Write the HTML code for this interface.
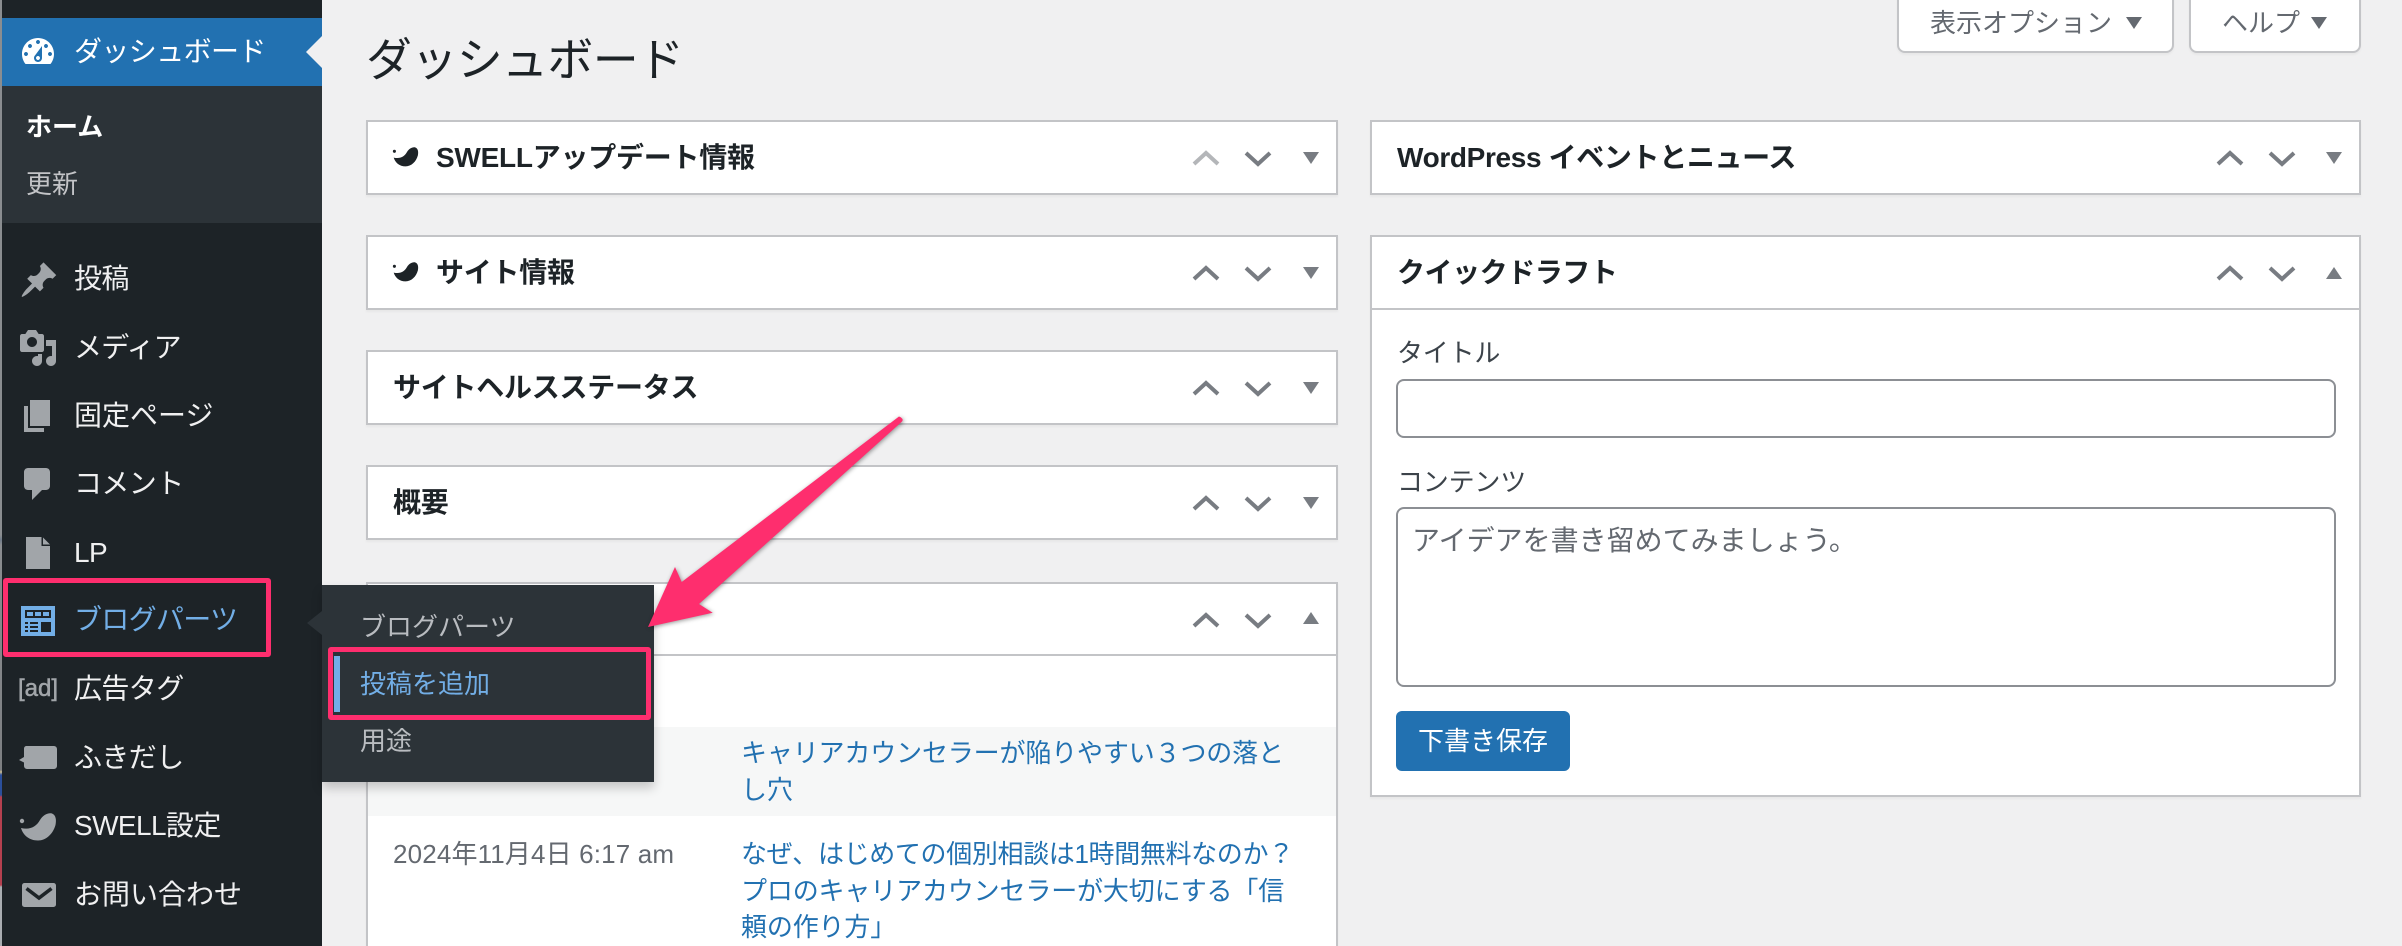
<!DOCTYPE html>
<html lang="ja"><head><meta charset="utf-8"><title>ダッシュボード</title>
<style>
*{box-sizing:border-box}
html,body{margin:0;padding:0;width:2402px;height:946px;overflow:hidden;background:#f0f0f1}
body{position:relative;font-family:"Liberation Sans","Noto Sans CJK JP",sans-serif;font-size:26px;color:#3c434a}
.t{position:absolute;white-space:nowrap;height:40px;line-height:40px}
.a{position:absolute}
.m{font-size:28px;color:#f0f0f1;left:74px;letter-spacing:-.6px}
.box{position:absolute;background:#fff;border:2px solid #c3c4c7;box-shadow:0 2px 2px rgba(0,0,0,.04)}
.h{font-size:28px;font-weight:700;color:#1d2327;letter-spacing:-.25px}
.f{font-size:26px;color:#b9bcc0;left:360px}
.l{color:#2271b1;left:741px;letter-spacing:-.15px}
svg{position:absolute;overflow:visible}
</style></head><body>

<!-- left stripe -->
<div class="a" style="left:0;top:0;width:2px;height:946px;background:linear-gradient(#8a8d90 0,#8a8d90 535px,#6f7a88 540px,#8a8d90 545px,#7d7f82 770px,#c9b98f 772px,#c9b98f 770px,#2b4f9b 775px,#2b4f9b 795px,#b5404f 797px,#b5404f 885px,#a9adb1 887px,#a9adb1 946px)"></div>

<!-- sidebar -->
<div class="a" style="left:2px;top:0;width:320px;height:946px;background:#1d2327"></div>
<div class="a" style="left:2px;top:18px;width:320px;height:68px;background:#2271b1"></div>
<div class="a" style="left:2px;top:86px;width:320px;height:137px;background:#2c3338"></div>
<svg style="left:0;top:0" width="330" height="80"><path d="M322 36L306 52L322 68Z" fill="#f0f0f1"/></svg>

<svg style="left:18px;top:32px" width="40" height="40" viewBox="0 0 20 20" fill="#fff"><path d="M3.76 16h12.48c1.1-1.37 1.76-3.11 1.76-5 0-4.42-3.58-8-8-8s-8 3.58-8 8c0 1.89.66 3.63 1.76 5zM10 4c.55 0 1 .45 1 1s-.45 1-1 1-1-.45-1-1 .45-1 1-1zM6 6c.55 0 1 .45 1 1s-.45 1-1 1-1-.45-1-1 .45-1 1-1zm8 0c.55 0 1 .45 1 1s-.45 1-1 1-1-.45-1-1 .45-1 1-1zm-5.37 5.55L12 7v6c0 1.1-.9 2-2 2s-2-.9-2-2c0-.57.24-1.08.63-1.45zM4 10c.55 0 1 .45 1 1s-.45 1-1 1-1-.45-1-1 .45-1 1-1zm12 0c.55 0 1 .45 1 1s-.45 1-1 1-1-.45-1-1 .45-1 1-1zm-5 3c0-.55-.45-1-1-1s-1 .45-1 1 .45 1 1 1 1-.45 1-1z"/></svg>
<svg style="left:19px;top:260px" width="40" height="40" viewBox="0 0 20 20" fill="#a1a5a9"><path d="M10.44 3.02l1.82-1.82 6.36 6.35-1.83 1.82c-1.05-.68-2.48-.57-3.41.36l-.75.75c-.92.93-1.04 2.35-.35 3.41l-1.83 1.82-2.41-2.41-2.8 2.79c-.42.42-3.38 2.71-3.8 2.29s1.86-3.39 2.28-3.81l2.79-2.79L4.1 9.36l1.83-1.82c1.05.69 2.48.57 3.4-.36l.75-.75c.93-.92 1.05-2.35.36-3.41z"/></svg>
<svg style="left:18px;top:328px" width="40" height="40" viewBox="0 0 20 20" fill="#a1a5a9"><path d="M13 11V4c0-.55-.45-1-1-1h-1.67L9 1H5L3.67 3H2c-.55 0-1 .45-1 1v7c0 .55.45 1 1 1h10c.55 0 1-.45 1-1zM7 4.5c1.38 0 2.5 1.12 2.5 2.5S8.38 9.5 7 9.5 4.5 8.38 4.5 7 5.62 4.5 7 4.5zM14 6h5v10.5c0 1.38-1.12 2.5-2.5 2.5S14 17.88 14 16.5s1.12-2.5 2.5-2.5c.17 0 .34.02.5.05V9h-3V6zm-4 8.05V13h2v3.5c0 1.38-1.12 2.5-2.5 2.5S7 17.88 7 16.5 8.12 14 9.5 14c.17 0 .34.02.5.05z"/></svg>
<svg style="left:18px;top:396px" width="40" height="40" viewBox="0 0 20 20" fill="#a1a5a9"><path d="M6 15V2h10v13H6zm-1 1h8v2H3V5h2v11z"/></svg>
<svg style="left:18px;top:464px" width="40" height="40" viewBox="0 0 20 20" fill="#a1a5a9"><path d="M5 2h9c1.1 0 2 .9 2 2v7c0 1.1-.9 2-2 2h-2l-5 5v-5H5c-1.1 0-2-.9-2-2V4c0-1.1.9-2 2-2z"/></svg>
<svg style="left:0;top:0" width="70" height="946" fill="#a1a5a9">
  <path d="M26 537H41.5V546H50V569H26Z"/><path d="M43 537.5L50 544.5H43Z"/>
  <rect x="21" y="606" width="34" height="30" fill="#72aee6"/>
  <rect x="25" y="610" width="26" height="8" fill="#1d2327"/>
  <rect x="27" y="612" width="6" height="4" fill="#72aee6"/><rect x="35" y="612" width="6" height="4" fill="#72aee6"/><rect x="43" y="612" width="6" height="4" fill="#72aee6"/>
  <rect x="41" y="622" width="10" height="10" fill="#1d2327"/>
  <g fill="#1d2327"><rect x="25" y="622" width="3" height="2"/><rect x="30" y="622" width="8" height="2"/><rect x="25" y="626" width="3" height="2"/><rect x="30" y="626" width="8" height="2"/><rect x="25" y="630" width="3" height="2"/><rect x="30" y="630" width="8" height="2"/></g>
  <path d="M26 746H54a3 3 0 0 1 3 3V766a3 3 0 0 1-3 3H27a3 3 0 0 1-3-3V762.500L19 760L24 757V749A3 3 0 0 1 26 746Z"/>
  <circle cx="22" cy="821" r="2.200"/>
  <path d="M21 828C30 830 36 827 40 820C43 815 48 812.500 52 813.500C56 815 56.500 820 55.500 825C53 834 46 840.500 38 840.500C29 840.500 23 835 21 828Z"/>
  <rect x="22" y="883" width="34" height="24" rx="2.500"/>
  <path d="M26.500 888.500L39 898L51.500 888.500" fill="none" stroke="#1d2327" stroke-width="3.600"/>
</svg>

<div class="t m" style="top:32px;color:#fff">ダッシュボード</div>
<div class="t" style="left:26px;top:107px;color:#fff;font-weight:700">ホーム</div>
<div class="t" style="left:26px;top:164px;color:#c3c4c7">更新</div>
<div class="t m" style="top:259px">投稿</div>
<div class="t m" style="top:328px;letter-spacing:-.8px">メディア</div>
<div class="t m" style="top:396px;letter-spacing:0">固定ページ</div>
<div class="t m" style="top:464px">コメント</div>
<div class="t m" style="top:533px">LP</div>
<div class="t m" style="top:600px;color:#72aee6;letter-spacing:-.7px">ブログパーツ</div>
<div class="t" style="left:18px;top:669px;font-size:24px;color:#a1a5a9;-webkit-text-stroke:.5px #a1a5a9">[ad]</div>
<div class="t m" style="top:669px">広告タグ</div>
<div class="t m" style="top:738px">ふきだし</div>
<div class="t m" style="top:806px">SWELL設定</div>
<div class="t m" style="top:875px;letter-spacing:0">お問い合わせ</div>

<!-- screen tabs -->
<div class="a" style="left:1897px;top:-12px;width:277px;height:65px;background:#fff;border:2px solid #c3c4c7;border-radius:8px;box-shadow:0 2px 2px rgba(0,0,0,.04)"></div>
<div class="a" style="left:2189px;top:-12px;width:172px;height:65px;background:#fff;border:2px solid #c3c4c7;border-radius:8px;box-shadow:0 2px 2px rgba(0,0,0,.04)"></div>
<div class="t" style="left:1930px;top:3px;color:#646970">表示オプション</div>
<div class="t" style="left:2222px;top:3px;color:#646970">ヘルプ</div>
<svg style="left:0;top:0" width="2402" height="40" fill="#646970"><path d="M2126 17H2142L2134 29Z"/><path d="M2311 17H2327L2319 29Z"/></svg>

<!-- title -->
<div class="t" style="left:366px;top:30px;height:60px;line-height:60px;font-size:46px;color:#1d2327;letter-spacing:-.65px">ダッシュボード</div>

<!-- left col boxes -->
<div class="box" style="left:366px;top:120px;width:972px;height:75px"></div>
<div class="box" style="left:366px;top:235px;width:972px;height:75px"></div>
<div class="box" style="left:366px;top:350px;width:972px;height:75px"></div>
<div class="box" style="left:366px;top:465px;width:972px;height:75px"></div>
<div class="box" style="left:366px;top:582px;width:972px;height:400px"></div>
<div class="a" style="left:368px;top:654px;width:968px;height:2px;background:#c3c4c7"></div>
<div class="a" style="left:368px;top:727px;width:968px;height:89px;background:#f6f7f7"></div>

<!-- swell icons in titles -->
<svg style="left:0;top:0" width="500" height="300" fill="#1d2327">
  <g transform="translate(379,-422) scale(.7)"><circle cx="22" cy="821" r="2.200" transform="translate(0,-2)"/><path d="M21 828C30 830 36 827 40 820C43 815 48 812.500 52 813.500C56 815 56.500 820 55.500 825C53 834 46 840.500 38 840.500C29 840.500 23 835 21 828Z"/></g>
  <g transform="translate(379,-307) scale(.7)"><circle cx="22" cy="821" r="2.200" transform="translate(0,-2)"/><path d="M21 828C30 830 36 827 40 820C43 815 48 812.500 52 813.500C56 815 56.500 820 55.500 825C53 834 46 840.500 38 840.500C29 840.500 23 835 21 828Z"/></g>
</svg>

<div class="t h" style="left:436px;top:138px">SWELLアップデート情報</div>
<div class="t h" style="left:436px;top:253px">サイト情報</div>
<div class="t h" style="left:393px;top:368px">サイトヘルスステータス</div>
<div class="t h" style="left:393px;top:483px">概要</div>

<!-- news rows -->
<div class="t l" style="top:733px">キャリアカウンセラーが陥りやすい３つの落と</div>
<div class="t l" style="top:770px">し穴</div>
<div class="t" style="left:393px;top:834px;color:#646970;letter-spacing:.15px">2024年11月4日 6:17 am</div>
<div class="t l" style="top:834px;letter-spacing:-.35px">なぜ、はじめての個別相談は1時間無料なのか？</div>
<div class="t l" style="top:871px">プロのキャリアカウンセラーが大切にする「信</div>
<div class="t l" style="top:907px">頼の作り方」</div>

<!-- right col -->
<div class="box" style="left:1370px;top:120px;width:991px;height:75px"></div>
<div class="box" style="left:1370px;top:235px;width:991px;height:562px"></div>
<div class="a" style="left:1372px;top:308px;width:987px;height:2px;background:#c3c4c7"></div>
<div class="t h" style="left:1397px;top:138px;letter-spacing:-.35px">WordPress イベントとニュース</div>
<div class="t h" style="left:1397px;top:253px;letter-spacing:-.45px">クイックドラフト</div>
<div class="t" style="left:1397px;top:333px;letter-spacing:-.2px">タイトル</div>
<div class="a" style="left:1396px;top:379px;width:940px;height:59px;border:2px solid #8c8f94;border-radius:8px;background:#fff"></div>
<div class="t" style="left:1397px;top:462px;letter-spacing:-.2px">コンテンツ</div>
<div class="a" style="left:1396px;top:507px;width:940px;height:180px;border:2px solid #8c8f94;border-radius:8px;background:#fff"></div>
<div class="t" style="left:1412px;top:521px;font-size:28px;color:#646970">アイデアを書き留めてみましょう。</div>
<div class="a" style="left:1396px;top:711px;width:174px;height:60px;background:#2271b1;border-radius:6px"></div>
<div class="t" style="left:1418px;top:721px;color:#fff">下書き保存</div>

<!-- handles -->
<svg style="left:0;top:0" width="2402" height="946" fill="none" stroke="#787c82" stroke-width="4">
  <path d="M1194 164L1206 153L1218 164" stroke="#b4b6b9"/><path d="M1246 153L1258 164L1270 153"/>
  <path d="M1194 279L1206 268L1218 279"/><path d="M1246 268L1258 279L1270 268"/>
  <path d="M1194 394L1206 383L1218 394"/><path d="M1246 383L1258 394L1270 383"/>
  <path d="M1194 509L1206 498L1218 509"/><path d="M1246 498L1258 509L1270 498"/>
  <path d="M1194 626L1206 615L1218 626"/><path d="M1246 615L1258 626L1270 615"/>
  <path d="M2218 164L2230 153L2242 164"/><path d="M2270 153L2282 164L2294 153"/>
  <path d="M2218 279L2230 268L2242 279"/><path d="M2270 268L2282 279L2294 268"/>
  <g fill="#787c82" stroke="none">
    <path d="M1303 152H1319L1311 164Z"/><path d="M1303 267H1319L1311 279Z"/><path d="M1303 382H1319L1311 394Z"/><path d="M1303 497H1319L1311 509Z"/><path d="M1303 624H1319L1311 612Z"/>
    <path d="M2326 152H2342L2334 164Z"/><path d="M2326 279H2342L2334 267Z"/>
  </g>
</svg>

<!-- flyout -->
<div class="a" style="left:322px;top:585px;width:332px;height:197px;background:#2c3338;box-shadow:0 6px 10px rgba(0,0,0,.2)"></div>
<svg style="left:0;top:0" width="340" height="660"><path d="M322 611L307 623L322 635Z" fill="#2c3338"/></svg>
<div class="a" style="left:334px;top:656px;width:6px;height:56px;background:#72aee6"></div>
<div class="t f" style="top:607px">ブログパーツ</div>
<div class="t f" style="top:664px;color:#72aee6">投稿を追加</div>
<div class="t f" style="top:721px">用途</div>

<!-- annotations -->
<div class="a" style="left:3px;top:578px;width:268px;height:79px;border:5px solid #fe2e6e;border-radius:3px"></div>
<div class="a" style="left:328px;top:647px;width:323px;height:73px;border:5px solid #fe2e6e;border-radius:3px"></div>
<svg style="left:0;top:0;filter:drop-shadow(1px 1px 2px rgba(0,0,0,.4))" width="2402" height="946"><path d="M899 416.500Q901 417 902.500 419Q903 421 901.500 422L699 604L712.700 612.700L648 627L675 567L681.700 582Z" fill="#fe2e6e"/></svg>
</body></html>
